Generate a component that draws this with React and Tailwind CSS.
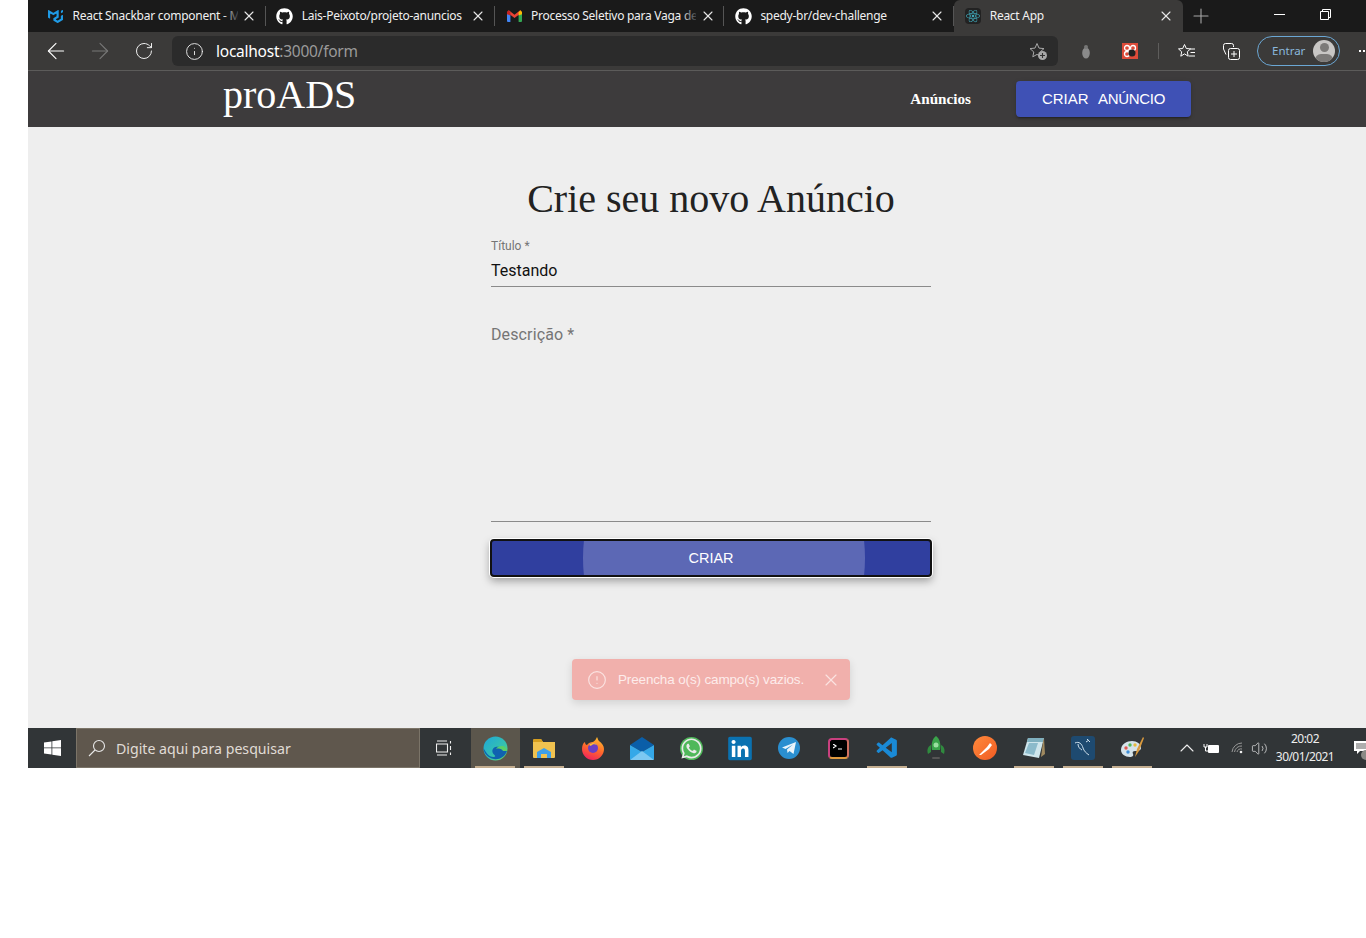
import React from "react";
import { ArrowLeft, ArrowRight, RotateCw, Info, X, Plus, AlertCircle, ChevronUp, Volume2 } from "lucide-react";
import { FaGithub, FaReact, FaLinkedin, FaWhatsapp } from "react-icons/fa";
import { SiMui } from "react-icons/si";
import { VscVscode } from "react-icons/vsc";

const uiFont = "font-['Noto_Sans','Open_Sans',sans-serif]";

function GmailIcon() {
  return (
    <svg width="15" height="12" viewBox="0 0 15 12">
      <path d="M0 2v9a1 1 0 0 0 1 1h2.400V5.500z" fill="#4285f4" />
      <path d="M11.600 5.500V12H14a1 1 0 0 0 1-1V2z" fill="#34a853" />
      <path d="M0 2.200 7.500 8 15 2.200 13.200.3 7.500 4.700 1.800.3z" fill="#ea4335" />
      <path d="M11.600 2.600 13.200.3 15 2v2.200l-3.400 1.300z" fill="#fbbc04" />
      <path d="M3.400 2.600 1.800.3 0 2v2.200l3.400 1.300z" fill="#c5221f" />
    </svg>
  );
}

function Tab({ icon, title, active, fade }) {
  return (
    <div className={`relative flex h-8 w-[229.3px] shrink-0 items-center ${active ? "rounded-t-md bg-[#3b3a39]" : ""}`}>
      <div className="ml-[10px] flex w-[18px] justify-center">{icon}</div>
      <span className={`ml-[8px] w-[165px] overflow-hidden whitespace-nowrap text-[12px] tracking-[-0.27px] text-[#f0f0f0] ${uiFont}`}>
        {title}
      </span>
      <X size={16} strokeWidth={1.6} className="ml-[3.5px] text-[#e8e8e8]" />
      {fade && <div className="absolute left-[186px] top-0 h-8 w-[18px] bg-gradient-to-r from-transparent to-[#1a1a1a]" />}
      {!active && <div className="absolute right-0 top-[6px] h-[20px] w-px bg-[#555]" />}
    </div>
  );
}

function TabBar() {
  return (
    <div className="flex h-8 w-[1366px] items-center bg-[#1a1a1a] pl-[8.5px]">
      <Tab icon={<SiMui size={15} className="text-[#1f9be6]" />} title="React Snackbar component - Mate" fade />
      <Tab icon={<FaGithub size={17} className="text-white" />} title="Lais-Peixoto/projeto-anuncios" />
      <Tab icon={<GmailIcon />} title="Processo Seletivo para Vaga de Desenv" fade />
      <Tab icon={<FaGithub size={17} className="text-white" />} title="spedy-br/dev-challenge" />
      <Tab icon={<span className="flex h-4 w-4 items-center justify-center rounded-sm bg-[#222]"><FaReact size={14} className="text-[#3fa7b8]" /></span>} title="React App" active />
      <Plus size={24} strokeWidth={1.1} className="ml-[6px] text-[#a8a8a8]" />
      <div className="mb-[4px] ml-[61px] h-px w-[11px] bg-white" />
      <svg width="11" height="11" viewBox="0 0 11 11" className="mb-[4px] ml-[35px] text-white" fill="none" stroke="currentColor">
        <path d="M.5 2.500h8v8h-8zM2.500 2.500v-2h8v8h-2" />
      </svg>
    </div>
  );
}

function ToolCell({ children }) {
  return <div className="flex h-[38px] w-[44px] shrink-0 items-center justify-center">{children}</div>;
}

function ToolBar() {
  return (
    <div className="flex h-[39px] w-[1366px] items-center border-b border-[#5c5b5a] bg-[#3b3a39] pl-[6px]">
      <ToolCell><ArrowLeft size={26} strokeWidth={1} className="text-white" /></ToolCell>
      <ToolCell><ArrowRight size={26} strokeWidth={1} className="text-[#787878]" /></ToolCell>
      <ToolCell><RotateCw size={20} strokeWidth={1.2} className="text-[#eee]" /></ToolCell>
      <div className="ml-[6px] flex h-[30px] w-[886px] shrink-0 items-center rounded-md bg-[#2b2b2b]">
        <Info size={19} strokeWidth={1.15} className="ml-[13px] text-[#eee]" />
        <span className={`ml-[12px] mt-[2px] text-[15.5px] tracking-[-0.25px] text-white ${uiFont}`}>
          localhost<span className="text-[#9a9a9a]">:3000/form</span>
        </span>
        <svg width="19" height="19" viewBox="0 0 19 19" className="ml-auto mr-[10px]" fill="none">
          <path d="M8 1.500l2 4.600 5 .5-3.800 3.300 1 4.800L8 12.400l-4.200 2.400 1-4.800L1 6.600l5-.5z" stroke="#a8a8a8" strokeWidth="1" />
          <circle cx="13.500" cy="13.500" r="4.500" fill="#a8a8a8" />
          <path d="M13.500 11v5M11 13.500h5" stroke="#333" strokeWidth="1.100" />
        </svg>
      </div>
      <div className="ml-[6px]" />
      <ToolCell>
        <svg width="10" height="15" viewBox="0 0 10 15">
          <ellipse cx="5" cy="9" rx="3.800" ry="5.500" fill="#8a8a8a" />
          <circle cx="5" cy="3" r="2" fill="#777" />
        </svg>
      </ToolCell>
      <ToolCell>
        <div className="relative flex h-4 w-4 items-center justify-center bg-[#dd4b39]">
          <svg width="14" height="14" viewBox="0 0 14 14">
            <circle cx="4" cy="4" r="2.500" fill="none" stroke="#fff" strokeWidth="1.300" />
            <circle cx="10" cy="4" r="2.500" fill="none" stroke="#fff" strokeWidth="1.300" />
            <circle cx="4" cy="10" r="2.500" fill="none" stroke="#fff" strokeWidth="1.300" />
            <circle cx="9" cy="9" r="3.500" fill="#222" />
          </svg>
        </div>
      </ToolCell>
      <div className="ml-[6px] mr-[6px] h-[16px] w-px bg-[#5e5d5c]" />
      <ToolCell>
        <svg width="18" height="17" viewBox="0 0 18 17" fill="none" stroke="#fff" strokeWidth="1">
          <path d="M6.500 1.500l1.800 4 4.200.4-3.200 2.900.9 4.400-3.700-2.300-3.700 2.300.9-4.400L.5 5.900l4.200-.4z" />
          <path d="M12 6h5M12.500 9.500h4.500M11 13h6" />
        </svg>
      </ToolCell>
      <ToolCell>
        <svg width="18" height="18" viewBox="0 0 18 18" fill="none" stroke="#fff" strokeWidth="1">
          <path d="M4 12.500 1.500 7V3.500a2 2 0 0 1 2-2h6a2 2 0 0 1 2 2V5" />
          <rect x="6.500" y="6.500" width="11" height="11" rx="2" />
          <path d="M12 9v6M9 12h6" />
        </svg>
      </ToolCell>
      <div className="ml-[4px] flex h-[30px] w-[83px] shrink-0 items-center rounded-full border border-[#6ba7d4] pl-[14px]">
        <span className={`text-[11.5px] text-[#8ab8dc] ${uiFont}`}>Entrar</span>
        <div className="relative ml-auto mr-[4px] h-[22px] w-[22px] overflow-hidden rounded-full bg-[#c8c6c4]">
          <div className="absolute left-[6.500px] top-[3px] h-[9px] w-[9px] rounded-full bg-[#7c7a78]" />
          <div className="absolute left-[2px] top-[14px] h-[12px] w-[18px] rounded-full bg-[#7c7a78]" />
        </div>
      </div>
      <span className="ml-[19px] flex gap-[2px]">
        <i className="h-[2px] w-[2px] bg-white" />
        <i className="h-[2px] w-[2px] bg-white" />
        <i className="h-[2px] w-[2px] bg-white" />
      </span>
    </div>
  );
}

function AppBar() {
  return (
    <div className="flex h-[56px] w-[1366px] items-center bg-[#3d3b3c] pl-[195px] pr-[203px] font-['Liberation_Serif',serif] text-white">
      <span className="mt-[-8px] text-[40px] leading-none">proADS</span>
      <span className="ml-auto text-[15.2px] font-bold">Anúncios</span>
      <button className="ml-[45px] h-[36px] w-[175px] whitespace-pre rounded bg-[#3f51b5] font-['Liberation_Sans',sans-serif] text-[15px] text-white shadow-[0_3px_1px_-2px_rgba(0,0,0,0.2),0_2px_2px_0_rgba(0,0,0,0.14),0_1px_5px_0_rgba(0,0,0,0.12)]">
        CRIAR  <span className="ml-[1px] tracking-[-0.3px]">ANÚNCIO</span>
      </button>
    </div>
  );
}

function Main() {
  return (
    <main className="relative flex h-[601px] w-[1366px] flex-col items-center bg-[#eeeeee]">
      <h1 className="mt-[49px] font-['Liberation_Serif',serif] text-[40px] leading-[46px] text-[#222]">Crie seu novo Anúncio</h1>
      <form className="flex w-[440px] flex-col font-['Roboto',sans-serif]">
        <label className="mt-[17px] h-[14px] text-[12px] leading-[14px] text-[#757575]">Título *</label>
        <div className="h-[34px] border-b border-[#8a8a8a] pt-[6px] text-[16px] leading-[24px] text-[#111]">Testando</div>
        <label className="mt-[38px] h-[20px] text-[16px] leading-[20px] tracking-[0.12px] text-[#757575]">Descrição *</label>
        <div className="h-[177px] border-b border-[#8a8a8a]" />
        <button type="button" className="relative -mx-px mt-[17px] h-[38px] overflow-hidden rounded-[4px] border-2 border-[#111] bg-[#303f9f] pt-px font-['Liberation_Sans',sans-serif] text-[14.5px] text-white shadow-[0_0_0_1px_#fff,0_4px_8px_rgba(0,0,0,0.35)]">
          <span className="absolute left-[91px] top-[-133px] h-[300px] w-[282px] rounded-[50%] bg-[#5c68b5]" />
          <span className="relative">CRIAR</span>
        </button>
      </form>
      <div className="absolute left-[544px] top-[532px] flex h-[41px] w-[278px] items-center rounded bg-[#f1b0ac] font-['Liberation_Sans',sans-serif] shadow-[0_3px_8px_rgba(0,0,0,0.12)]">
        <AlertCircle size={20} strokeWidth={1.4} className="ml-[15px] text-[#fbe3e1]" />
        <span className="ml-[11px] mt-[1px] whitespace-nowrap text-[13.5px] tracking-[-0.15px] text-[#fdeceb]">Preencha o(s) campo(s) vazios.</span>
        <X size={20} strokeWidth={1.4} className="ml-auto mr-[9px] text-[#fbe3e1]" />
      </div>
    </main>
  );
}

const icons = [
  { on: true, active: true, el: (
    <svg width="25" height="25" viewBox="0 0 25 25">
      <defs>
        <linearGradient id="eg" x1="0" y1="0" x2="1" y2="1"><stop offset="0" stopColor="#1ea7d8" /><stop offset="0.6" stopColor="#35c1b0" /><stop offset="1" stopColor="#6fdc5a" /></linearGradient>
      </defs>
      <circle cx="12.500" cy="12.500" r="12" fill="url(#eg)" />
      <path d="M24 15c-2 6-8 9-13 8C5 22 .5 17 .5 12c2 4 5 9 10 9 2 0 2-1 1-2-3-2-3-7 1-8 4-1 8 1 8 4z" fill="#0f62b0" />
      <path d="M13 13c3-1 6 0 7 2h4c0-3-3-5-5-5-3 0-5 1-6 3z" fill="#59d06a" />
    </svg>
  )},
  { on: true, el: (
    <svg width="22" height="19" viewBox="0 0 22 19">
      <path d="M0 1.500A1.500 1.500 0 0 1 1.500 0H8l2 3h12v15a1 1 0 0 1-1 1H1a1 1 0 0 1-1-1z" fill="#f0c24f" />
      <path d="M0 1.500A1.500 1.500 0 0 1 1.500 0H8l2 3H0z" fill="#d69e1f" />
      <path d="M4 19v-6l7-4 7 4v6h-4v-4H8v4z" fill="#3e9fe8" />
    </svg>
  )},
  { el: (
    <svg width="24" height="24" viewBox="0 0 24 24">
      <defs>
        <linearGradient id="ff" x1="0.700" y1="0" x2="0.300" y2="1"><stop offset="0" stopColor="#ffbd2e" /><stop offset="0.5" stopColor="#ff6a2b" /><stop offset="1" stopColor="#f0205e" /></linearGradient>
      </defs>
      <path d="M16 1c1 2 1 3 2 4 3 2 5 5 5 8a11 11 0 1 1-22 0c0-3 1-6 3-7 0 2 1 3 2 3 1-2 4-3 6-3 2-1 3-3 4-5z" fill="url(#ff)" />
      <circle cx="12" cy="12" r="5" fill="#6b3fc4" />
      <path d="M8 9c3-3 7-2 8 0-2-1-5-1-6 1z" fill="#ffbd2e" />
    </svg>
  )},
  { el: (
    <svg width="24" height="23" viewBox="0 0 24 23">
      <path d="M0 8 12 0l12 8-12 7z" fill="#0a5ea8" />
      <path d="M0 8v14a1 1 0 0 0 1 1h22a1 1 0 0 0 1-1V8l-12 7z" fill="#35a8e8" />
      <path d="M0 23 12 14l12 9z" fill="#7cc8f2" />
    </svg>
  )},
  { el: (
    <span className="relative flex h-[23px] w-[23px] items-center justify-center rounded-full bg-[#4fb85a]">
      <FaWhatsapp size={23} className="absolute text-[#eaeaea]" />
    </span>
  )},
  { el: (
    <span className="relative flex h-6 w-6 items-center justify-center">
      <span className="absolute inset-[3px] bg-white" />
      <FaLinkedin size={27} className="relative text-[#0a72b1]" />
    </span>
  )},
  { el: (
    <span className="flex h-[22px] w-[22px] items-center justify-center rounded-full bg-[#2a8fd0]">
      <svg width="14" height="12" viewBox="0 0 14 12"><path d="M0 5.500 14 0l-2.500 12-4-3-2 2-.5-3.500L11 2.500 3.500 7z" fill="#e8f4fb" /></svg>
    </span>
  )},
  { el: (
    <span className="flex h-[21px] w-[21px] items-start rounded-[4px] border-2 border-[#c9407f] bg-black pl-[3px] pt-[4px] [border-bottom-color:#e09a3e] [border-right-color:#d07060]">
      <svg width="10" height="6" viewBox="0 0 10 6"><path d="M0 0l3 2-3 2M5 5h4" stroke="#fff" strokeWidth="1.200" fill="none" /></svg>
    </span>
  )},
  { on: true, el: <VscVscode size={25} className="text-[#1a8ad6]" /> },
  { el: (
    <svg width="18" height="24" viewBox="0 0 18 24">
      <path d="M9 0c4 3 5 8 4 14H5C4 8 5 3 9 0z" fill="#3aa34a" />
      <circle cx="9" cy="9" r="2.500" fill="#9adfa0" />
      <path d="M4 9C0 11 0 15 1 18l3-2zM14 9c4 2 4 6 3 9l-3-2z" fill="#2f8a3e" />
      <rect x="5" y="21" width="8" height="2" rx="1" fill="#555" />
    </svg>
  )},
  { el: (
    <span className="flex h-6 w-6 items-center justify-center rounded-full bg-gradient-to-br from-[#ff8a3c] to-[#f05a22]">
      <svg width="15" height="15" viewBox="0 0 15 15"><path d="M1 14 9 6l2 2-8 6zM9 6l3-4 2 2-3 4z" fill="#fff" /></svg>
    </span>
  )},
  { on: true, el: (
    <svg width="24" height="24" viewBox="0 0 24 24">
      <path d="M6 2h16l-5 20-16-3z" fill="#cfe6ec" />
      <path d="M6 2h16l-1 4H5z" fill="#7fb0bf" />
      <path d="M21 6l1-4 1 16-4 3z" fill="#a08a60" />
      <path d="M3 17 7 7h9l-4 12z" fill="#5f9fb5" opacity="0.6" />
    </svg>
  )},
  { on: true, el: (
    <span className="flex h-6 w-6 items-center justify-center rounded-[3px] bg-[#1e4a70]">
      <svg width="20" height="20" viewBox="0 0 20 20" fill="none" stroke="#cfe0ec" strokeWidth="1"><path d="M2 5c4-2 7 1 8 5 1 3 3 5 6 7M5 6c0 3 2 5 4 6" /><path d="M14 1l3 3M13 4l3-2" /></svg>
    </span>
  )},
  { on: true, el: (
    <svg width="25" height="24" viewBox="0 0 25 24">
      <path d="M1 14C1 8 7 5 12 5c5 0 9 3 9 7 0 3-4 3-6 3-2 0-3 1-2 3 1 2-1 3-3 3-5 0-9-3-9-7z" fill="#d5e3ea" />
      <circle cx="6" cy="12" r="1.700" fill="#e0574f" /><circle cx="10" cy="9" r="1.700" fill="#4fb85a" /><circle cx="15" cy="9" r="1.700" fill="#e8b93c" /><circle cx="8" cy="16" r="1.700" fill="#3f8fd8" />
      <path d="M23 1 17 13l-2 8 4-6 5-13z" fill="#d99a3e" />
    </svg>
  )},
];

function TaskBar() {
  return (
    <div className="flex h-[40px] w-[1366px] items-stretch bg-[#313537]">
      <div className="flex w-[48px] items-center justify-center">
        <svg width="17" height="16" viewBox="0 0 17 16" fill="#fff"><path d="M0 2.500 7.500 1.400v6.100H0zM8.300 1.300 17 0v7.500H8.300zM0 8.300h7.500v6.200L0 13.400zM8.300 8.300H17V16l-8.700-1.300z" /></svg>
      </div>
      <div className="flex w-[344px] items-center border border-[#7b7468] bg-[#5f574d] pl-[11px]">
        <svg width="18" height="18" viewBox="0 0 18 18" fill="none" stroke="#e8e8e8" strokeWidth="1.100"><circle cx="11" cy="7" r="5.500" /><path d="M7 11 1 17" /></svg>
        <span className={`ml-[10px] mt-[1px] text-[14.17px] text-[#e0dcd6] ${uiFont}`}>Digite aqui para pesquisar</span>
      </div>
      <div className="flex w-[50.5px] items-center justify-center pr-[2px]">
        <svg width="17" height="16" viewBox="0 0 17 16" fill="none" stroke="#eee" strokeWidth="1.100"><path d="M1 1h10M1 15h10M.5 4h11v8H.5zM14.500 1v2.500M14.500 6v4M14.500 12.500V15" /></svg>
      </div>
      {icons.map((ic, i) => (
        <div key={i} className={`relative flex w-[49px] items-center justify-center ${ic.active ? "bg-[#5b564c]" : ""}`}>
          {ic.el}
          {ic.on && <div className="absolute bottom-0 left-[4px] h-[2px] w-[40px] bg-[#c4ae90]" />}
        </div>
      ))}
      <div className="flex w-[42.5px] items-center justify-end">
        <ChevronUp size={24} strokeWidth={1.1} className="text-[#eee]" />
      </div>
      <div className="ml-[4px] flex items-center">
        <svg width="16" height="11" viewBox="0 0 16 11" fill="#fff"><rect x="5" y="2" width="11" height="8" rx="1" /><path d="M1 1v3h3V1M2.500 4v4h3" stroke="#fff" fill="none" /></svg>
      </div>
      <div className="ml-[12px] flex items-center">
        <svg width="13" height="12" viewBox="0 0 13 12" fill="none" stroke="#999" strokeWidth="1"><path d="M1 10A10 10 0 0 1 11 1M3.500 10A7 7 0 0 1 11 4M6 10a4 4 0 0 1 5-3" /><circle cx="10" cy="10" r="1.300" fill="#eee" stroke="none" /></svg>
      </div>
      <div className="ml-[7px] flex items-center">
        <Volume2 size={17} strokeWidth={1} className="text-[#eee]" />
      </div>
      <div className={`ml-[7px] flex w-[60px] flex-col items-center justify-center text-[12px] leading-[18px] tracking-[-0.55px] text-[#eee] ${uiFont}`}>
        <span>20:02</span>
        <span>30/01/2021</span>
      </div>
      <div className="relative ml-[19px] flex items-center">
        <svg width="14" height="14" viewBox="0 0 14 14"><path d="M0 0h14v10H6l-3 3v-3H0z" fill="#fff" /><path d="M2 3h10M2 5h10M2 7h10" stroke="#333" strokeWidth="0.800" /></svg>
        <span className="absolute left-[7px] top-[22px] h-[10px] w-[10px] rounded-full bg-[#8a8a86]" />
      </div>
    </div>
  );
}

export default function App() {
  return (
    <div className="flex h-[938px] w-[1366px] overflow-hidden bg-white">
      <div className="w-[28px] shrink-0" />
      <div className="h-[768px] w-[1338px] shrink-0 overflow-hidden">
        <TabBar />
        <ToolBar />
        <AppBar />
        <Main />
        <TaskBar />
      </div>
    </div>
  );
}
